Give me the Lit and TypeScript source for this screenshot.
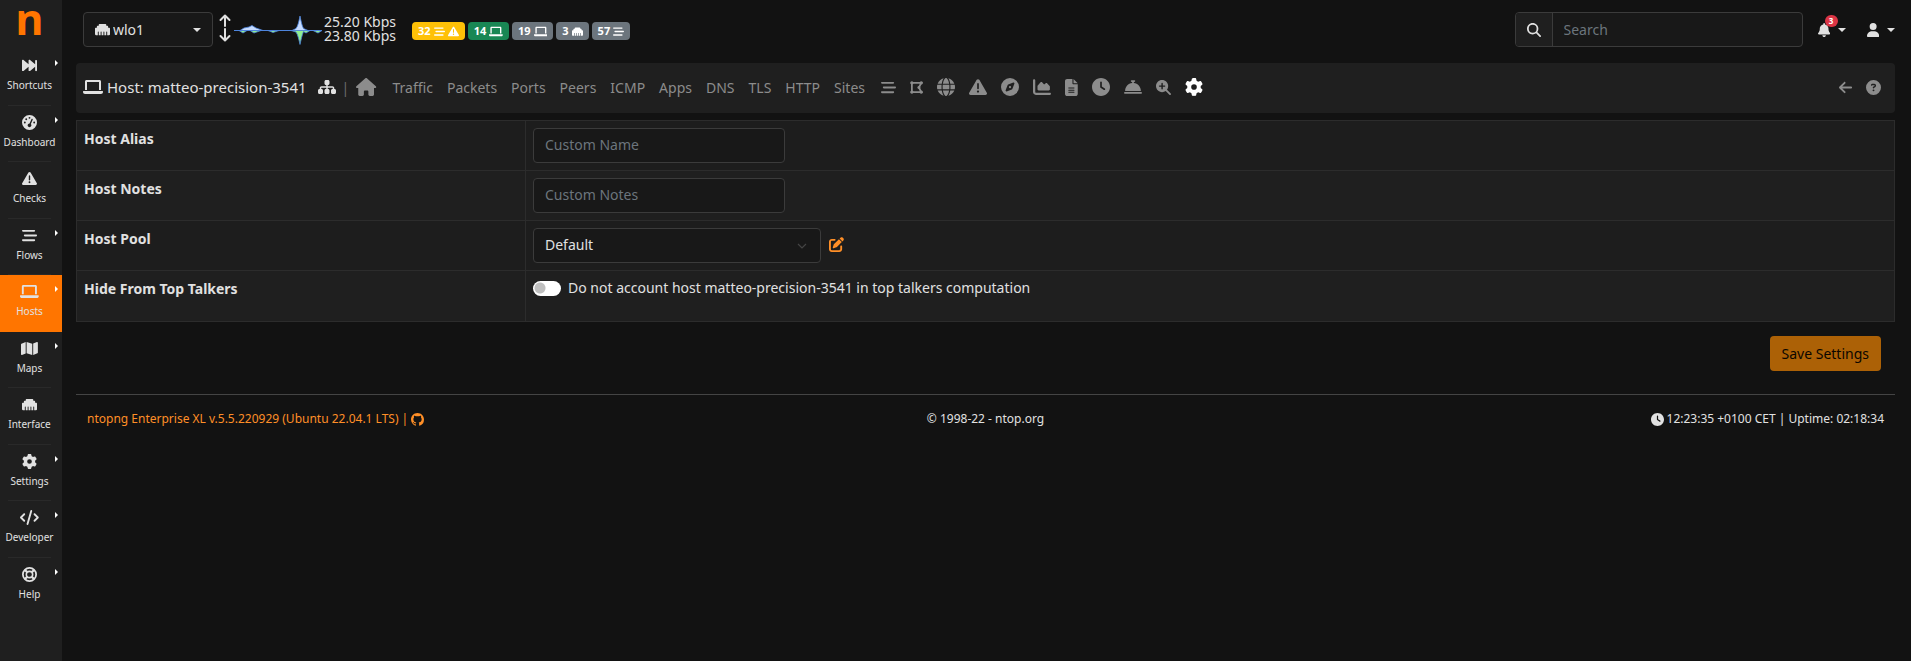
import { LitElement, html, css, svg, nothing } from "lit";
import { customElement, property, state } from "lit/decorators.js";
import { classMap } from "lit/directives/class-map.js";

type Icon = { w: number; h?: number; d?: string; body?: unknown };

const ICONS: Record<string, Icon> = {
  laptop: { w: 640, d: "M128 96h384v256h64V80C576 53.6 554.4 32 528 32h-416C85.6 32 64 53.6 64 80V352h64V96zM624 384h-608C7.3 384 0 391.3 0 400V416c0 35.3 28.8 64 64 64h512c35.3 0 64-28.8 64-64v-16C640 391.3 632.8 384 624 384z" },
  stream: { w: 512, d: "M0 96C0 78.3 14.3 64 32 64H416C433.7 64 448 78.3 448 96S433.7 128 416 128H32C14.3 128 0 113.7 0 96zM64 256C64 238.3 78.3 224 96 224H480C497.7 224 512 238.3 512 256S497.7 288 480 288H96C78.3 288 64 273.7 64 256zM416 448H32C14.3 448 0 433.7 0 416S14.3 384 32 384H416C433.7 384 448 398.3 448 416S433.7 448 416 448z" },
  warning: { w: 512, d: "M506.3 417l-213.3-364c-16.3-28-57.5-28-74 0l-213.2 364C-10.6 444.9 9.8 480 42.7 480h426.6C502.1 480 522.6 445 506.3 417zM232 168c0-13.3 10.8-24 24-24S280 154.8 280 168v128c0 13.3-10.8 24-24 24S232 309.3 232 296V168zM256 416c-17.4 0-31.4-14.1-31.4-31.4c0-17.4 14.1-31.4 31.4-31.4s31.4 14.1 31.4 31.4C287.4 401.9 273.4 416 256 416z" },
  forward: { w: 512, d: "M0 416V96c0-27.4 31.9-41.7 52.5-24.6L224 214.3V96c0-27.4 31.9-41.7 52.5-24.6L448 214.3V96c0-17.7 14.3-32 32-32S512 78.4 512 96v320c0 17.7-14.3 32-32 32S448 433.6 448 416V298.6L276.5 440.6C255.9 457.7 224 443.3 224 416V298.6L52.5 440.6C31.9 457.7 0 443.3 0 416z" },
  home: { w: 576, d: "M575.8 255.5c0 18-15 32.1-32 32.1h-32l.7 160.2c0 2.7-.2 5.4-.5 8.1V472c0 22.1-17.9 40-40 40H392c-22.1 0-40-17.9-40-40V384c0-17.7-14.3-32-32-32H256c-17.7 0-32 14.3-32 32v88c0 22.1-17.9 40-40 40H104c-22.1 0-40-17.9-40-40V287.6H32c-18 0-32-14-32-32.1c0-9 3-17 10-24L266.4 8c7-7 15-8 22-8s15 2 21 7L564.8 231.5c8 7 12 15 11 24z" },
  gear: { w: 512, d: "M495.9 166.6c3.2 8.7 .5 18.4-6.4 24.6l-43.3 39.4c1.1 8.3 1.7 16.8 1.7 25.4s-.6 17.1-1.7 25.4l43.3 39.4c6.9 6.2 9.6 15.9 6.4 24.6c-4.4 11.9-9.7 23.3-15.8 34.3l-4.7 8.1c-6.6 11-14 21.4-22.1 31.2c-5.9 7.2-15.7 9.6-24.5 6.8l-55.7-17.7c-13.4 10.3-28.2 18.9-44 25.4l-12.5 57.1c-2 9.1-9 16.3-18.2 17.8c-13.8 2.3-28 3.5-42.5 3.5s-28.7-1.2-42.5-3.5c-9.2-1.5-16.2-8.7-18.2-17.8l-12.5-57.1c-15.8-6.5-30.6-15.1-44-25.4L83.1 425.9c-8.8 2.8-18.6 .3-24.5-6.8c-8.1-9.8-15.5-20.2-22.1-31.2l-4.7-8.1c-6.1-11-11.4-22.4-15.8-34.3c-3.2-8.7-.5-18.4 6.4-24.6l43.3-39.4C64.6 273.1 64 264.6 64 256s.6-17.1 1.7-25.4L22.4 191.2c-6.9-6.2-9.6-15.9-6.4-24.6c4.4-11.9 9.7-23.3 15.8-34.3l4.7-8.1c6.6-11 14-21.4 22.1-31.2c5.9-7.2 15.7-9.6 24.5-6.8l55.7 17.7c13.4-10.3 28.2-18.9 44-25.4l12.5-57.1c2-9.1 9-16.3 18.2-17.8C227.3 1.2 241.5 0 256 0s28.7 1.2 42.5 3.5c9.2 1.5 16.2 8.7 18.2 17.8l12.5 57.1c15.8 6.5 30.6 15.1 44 25.4l55.7-17.7c8.8-2.8 18.6-.3 24.5 6.8c8.1 9.8 15.5 20.2 22.1 31.2l4.7 8.1c6.1 11 11.4 22.4 15.8 34.3zM256 336a80 80 0 1 0 0-160 80 80 0 1 0 0 160z" },
  clock: { w: 512, d: "M256 512C114.6 512 0 397.4 0 256S114.6 0 256 0S512 114.6 512 256s-114.6 256-256 256zM232 120V256c0 8 4 15.5 10.7 20l96 64c11 7.4 25.9 4.4 33.3-6.7s4.4-25.9-6.7-33.3L280 243.2V120c0-13.3-10.7-24-24-24s-24 10.7-24 24z" },
  bell: { w: 448, d: "M224 0c-17.7 0-32 14.3-32 32V51.2C119 66 64 130.6 64 208v18.8c0 47-17.3 92.4-48.5 127.6l-7.4 8.3c-8.4 9.4-10.4 22.9-5.3 34.4S19.4 416 32 416H416c12.6 0 24-7.4 29.2-18.9s3.1-25-5.3-34.4l-7.4-8.3C401.3 319.2 384 273.9 384 226.8V208c0-77.4-55-142-128-156.8V32c0-17.7-14.3-32-32-32zm45.3 493.3c12-12 18.7-28.3 18.7-45.3H160c0 17 6.7 33.3 18.7 45.3s28.3 18.7 45.3 18.7s33.3-6.7 45.3-18.7z" },
  user: { w: 448, d: "M224 256A128 128 0 1 0 224 0a128 128 0 1 0 0 256zm-45.7 48C79.8 304 0 383.8 0 482.3C0 498.7 13.3 512 29.7 512H418.3c16.4 0 29.7-13.3 29.7-29.7C448 383.8 368.2 304 269.7 304H178.3z" },
  search: { w: 512, d: "M416 208c0 45.9-14.9 88.3-40 122.7L502.6 457.4c12.5 12.5 12.5 32.8 0 45.3s-32.8 12.5-45.3 0L330.7 376c-34.4 25.2-76.8 40-122.7 40C93.1 416 0 322.9 0 208S93.1 0 208 0S416 93.1 416 208zM208 352a144 144 0 1 0 0-288 144 144 0 1 0 0 288z" },
  zoom: { w: 512, d: "M416 208c0 45.9-14.9 88.3-40 122.7L502.6 457.4c12.5 12.5 12.5 32.8 0 45.3s-32.8 12.5-45.3 0L330.7 376c-34.4 25.2-76.8 40-122.7 40C93.1 416 0 322.9 0 208S93.1 0 208 0S416 93.1 416 208zM184 296c0 13.3 10.7 24 24 24s24-10.7 24-24V232h64c13.3 0 24-10.7 24-24s-10.7-24-24-24H232V120c0-13.3-10.7-24-24-24s-24 10.7-24 24v64H120c-13.3 0-24 10.7-24 24s10.7 24 24 24h64v64z" },
  back: { w: 448, d: "M9.4 233.4c-12.5 12.5-12.5 32.8 0 45.3l160 160c12.5 12.5 32.8 12.5 45.3 0s12.5-32.8 0-45.3L109.2 288 416 288c17.7 0 32-14.3 32-32s-14.3-32-32-32l-306.7 0L214.6 118.6c12.5-12.5 12.5-32.8 0-45.3s-32.8-12.5-45.3 0l-160 160z" },
  help: { w: 512, d: "M256 512A256 256 0 1 0 256 0a256 256 0 1 0 0 512zM169.8 165.3c7.9-22.3 29.1-37.3 52.8-37.3h58.3c34.9 0 63.1 28.3 63.1 63.1c0 22.6-12.1 43.5-31.7 54.8L280 264.4c-.2 13-10.9 23.6-24 23.6c-13.3 0-24-10.7-24-24V250.5c0-8.6 4.6-16.5 12.1-20.8l44.3-25.4c4.7-2.7 7.6-7.7 7.6-13.1c0-8.4-6.8-15.1-15.1-15.1H222.6c-3.4 0-6.4 2.1-7.5 5.3l-.4 1.2c-4.4 12.5-18.2 19-30.6 14.6s-19-18.2-14.6-30.6l.4-1.2zM224 352a32 32 0 1 1 64 0 32 32 0 1 1 -64 0z" },
  globe: { w: 512, d: "M352 256c0 22.2-1.2 43.6-3.3 64H163.3c-2.2-20.4-3.3-41.8-3.3-64s1.2-43.6 3.3-64H348.7c2.2 20.4 3.3 41.8 3.3 64zm28.8-64H503.9c5.3 20.5 8.1 41.9 8.1 64s-2.8 43.5-8.1 64H380.8c2.1-20.6 3.2-42 3.2-64s-1.1-43.4-3.2-64zm112.6-32H376.7c-10-63.9-29.8-117.4-55.3-151.6c78.3 20.7 142 77.5 171.9 151.6zm-149.1 0H167.7c6.1-36.4 15.5-68.6 27-94.7c10.5-23.6 22.2-40.7 33.5-51.5C239.4 3.2 248.7 0 256 0s16.6 3.2 27.8 13.8c11.3 10.8 23 27.9 33.5 51.5c11.6 26 20.9 58.2 27 94.7zm-209 0H18.6C48.6 85.9 112.2 29.1 190.6 8.4C165.1 42.6 145.3 96.1 135.3 160zM8.1 192H131.2c-2.1 20.6-3.2 42-3.2 64s1.1 43.4 3.2 64H8.1C2.8 299.5 0 278.1 0 256s2.8-43.5 8.1-64zM194.7 446.6c-11.6-26-20.9-58.2-27-94.6H344.3c-6.1 36.4-15.5 68.6-27 94.6c-10.5 23.6-22.2 40.7-33.5 51.5C272.6 508.8 263.3 512 256 512s-16.6-3.2-27.8-13.8c-11.3-10.8-23-27.9-33.5-51.5zM135.3 352c10 63.9 29.8 117.4 55.3 151.6C112.2 482.9 48.6 426.1 18.6 352H135.3zm358.1 0c-30 74.1-93.6 130.9-171.9 151.6c25.5-34.2 45.2-87.7 55.3-151.6H493.4z" },
  compass: { w: 512, d: "M256 512A256 256 0 1 0 256 0a256 256 0 1 0 0 512zm50.7-186.9L162.4 380.6c-19.4 7.5-38.5-11.6-31-31l55.5-144.3c3.3-8.5 9.9-15.1 18.4-18.4l144.3-55.5c19.4-7.5 38.5 11.6 31 31L325.1 306.7c-3.2 8.5-9.9 15.1-18.4 18.4zM288 256a32 32 0 1 0 -64 0 32 32 0 1 0 64 0z" },
  chart: { w: 512, d: "M64 64c0-17.7-14.3-32-32-32S0 46.3 0 64V400c0 44.2 35.8 80 80 80H480c17.7 0 32-14.3 32-32s-14.3-32-32-32H80c-8.8 0-16-7.2-16-16V64zm96 288H448c17.7 0 32-14.3 32-32V251.8c0-7.6-2.7-15-7.7-20.8l-65.8-76.8c-12.1-14.2-33.7-15-46.9-1.8l-21 21c-10 10-26.4 9.2-35.4-1.6l-39.2-47c-12.6-15.1-35.7-15.4-48.7-.6L135.9 215c-5.1 5.8-7.9 13.3-7.9 21.1v84c0 17.7 14.3 32 32 32z" },
  file: { w: 384, d: "M64 0C28.7 0 0 28.7 0 64V448c0 35.3 28.7 64 64 64H320c35.3 0 64-28.7 64-64V160H256c-17.7 0-32-14.3-32-32V0H64zM256 0V128H384L256 0zM112 256H272c8.8 0 16 7.2 16 16s-7.2 16-16 16H112c-8.8 0-16-7.2-16-16s7.2-16 16-16zm0 64H272c8.8 0 16 7.2 16 16s-7.2 16-16 16H112c-8.8 0-16-7.2-16-16s7.2-16 16-16zm0 64H272c8.8 0 16 7.2 16 16s-7.2 16-16 16H112c-8.8 0-16-7.2-16-16s7.2-16 16-16z" },
  concierge: { w: 512, d: "M216 64c-13.3 0-24 10.7-24 24s10.7 24 24 24h16v33.3C119.6 157.2 32 252.4 32 368H480c0-115.6-87.6-210.8-200-222.7V112h16c13.3 0 24-10.7 24-24s-10.7-24-24-24H216zM24 400c-13.3 0-24 10.7-24 24s10.7 24 24 24H488c13.3 0 24-10.7 24-24s-10.7-24-24-24H24z" },
  sitemap: { w: 576, d: "M208 80c0-26.5 21.5-48 48-48h64c26.5 0 48 21.5 48 48v64c0 26.5-21.5 48-48 48h-8v40H464c30.9 0 56 25.1 56 56v32h8c26.5 0 48 21.5 48 48v64c0 26.5-21.5 48-48 48H464c-26.5 0-48-21.5-48-48V368c0-26.5 21.5-48 48-48h8V288c0-4.4-3.6-8-8-8H312v40h8c26.5 0 48 21.5 48 48v64c0 26.5-21.5 48-48 48H256c-26.5 0-48-21.5-48-48V368c0-26.5 21.5-48 48-48h8V280H112c-4.4 0-8 3.6-8 8v32h8c26.5 0 48 21.5 48 48v64c0 26.5-21.5 48-48 48H48c-26.5 0-48-21.5-48-48V368c0-26.5 21.5-48 48-48h8V288c0-30.9 25.1-56 56-56H264V192h-8c-26.5 0-48-21.5-48-48V80z" },
  map: { w: 576, d: "M384 476.1L192 421.2V35.9L384 90.8V476.1zm32-1.2V88.4L543.1 37.5c15.8-6.3 32.9 5.3 32.9 22.3V394.6c0 9.8-6 18.6-15.1 22.3L416 474.8zM15.1 95.1L160 37.2V423.6L32.9 474.5C17.1 480.8 0 469.2 0 452.2V117.4c0-9.8 6-18.6 15.1-22.3z" },
  code: { w: 640, d: "M392.8 1.2c-17-4.9-34.7 5-39.6 22l-128 448c-4.9 17 5 34.7 22 39.6s34.7-5 39.6-22l128-448c4.9-17-5-34.7-22-39.6zm80.6 120.1c-12.5 12.5-12.5 32.8 0 45.3L562.7 256l-89.4 89.4c-12.5 12.5-12.5 32.8 0 45.3s32.8 12.5 45.3 0l112-112c12.5-12.5 12.5-32.8 0-45.3l-112-112c-12.5-12.5-32.8-12.5-45.3 0zm-306.7 0c-12.5-12.5-32.8-12.5-45.3 0l-112 112c-12.5 12.5-12.5 32.8 0 45.3l112 112c12.5 12.5 32.8 12.5 45.3 0s12.5-32.8 0-45.3L77.3 256l89.4-89.4c12.5-12.5 12.5-32.8 0-45.3z" },
  gauge: { w: 512, d: "M0 256a256 256 0 1 1 512 0A256 256 0 1 1 0 256zM288 96a32 32 0 1 0 -64 0 32 32 0 1 0 64 0zM256 416c35.3 0 64-28.7 64-64c0-17.4-6.9-33.1-18.1-44.6L366 161.7c5.3-12.1-.2-26.3-12.3-31.6s-26.3 .2-31.6 12.3L257.9 288c-36.7 0-65.9 28.7-65.9 64s28.7 64 64 64zM176 144a32 32 0 1 0 -64 0 32 32 0 1 0 64 0zM96 288a32 32 0 1 0 0-64 32 32 0 1 0 0 64zm352-32a32 32 0 1 0 -64 0 32 32 0 1 0 64 0z" },
  ethernet: { w: 512, d: "M0 224V416c0 17.7 14.3 32 32 32H96V336c0-8.8 7.2-16 16-16s16 7.2 16 16V448h64V336c0-8.8 7.2-16 16-16s16 7.2 16 16V448h64V336c0-8.8 7.2-16 16-16s16 7.2 16 16V448h64V336c0-8.8 7.2-16 16-16s16 7.2 16 16V448h64c17.7 0 32-14.3 32-32V224c0-17.7-14.3-32-32-32H448V160c0-17.7-14.3-32-32-32H384V96c0-17.7-14.3-32-32-32H160c-17.7 0-32 14.3-32 32v32H96c-17.7 0-32 14.3-32 32v32H32c-17.7 0-32 14.3-32 32z" },
  edit: { w: 512, d: "M471.6 21.7c-21.9-21.9-57.3-21.9-79.2 0L362.3 51.7l97.9 97.9 30.1-30.1c21.9-21.9 21.9-57.3 0-79.2L471.6 21.7zm-299.2 220c-6.1 6.1-10.8 13.6-13.5 21.9l-29.6 88.8c-2.9 8.6-.6 18.1 5.8 24.6s15.9 8.7 24.6 5.8l88.8-29.6c8.2-2.7 15.7-7.4 21.9-13.5L437.7 172.3 339.7 74.3 172.4 241.7zM96 64C43 64 0 107 0 160V416c0 53 43 96 96 96H352c53 0 96-43 96-96V320c0-17.7-14.3-32-32-32s-32 14.3-32 32v96c0 17.7-14.3 32-32 32H96c-17.7 0-32-14.3-32-32V160c0-17.7 14.3-32 32-32h96c17.7 0 32-14.3 32-32s-14.3-32-32-32H96z" },
  github: { w: 16, h: 16, d: "M8 0C3.58 0 0 3.58 0 8c0 3.54 2.29 6.53 5.47 7.59.4.07.55-.17.55-.38 0-.19-.01-.82-.01-1.49-2.01.37-2.53-.49-2.69-.94-.09-.23-.48-.94-.82-1.13-.28-.15-.68-.52-.01-.53.63-.01 1.08.58 1.23.82.72 1.21 1.87.87 2.33.66.07-.52.28-.87.51-1.07-1.78-.2-3.64-.89-3.64-3.95 0-.87.31-1.59.82-2.15-.08-.2-.36-1.02.08-2.12 0 0 .67-.21 2.2.82.64-.18 1.32-.27 2-.27.68 0 1.36.09 2 .27 1.53-1.04 2.2-.82 2.2-.82.44 1.1.16 1.92.08 2.12.51.56.82 1.27.82 2.15 0 3.07-1.87 3.75-3.65 3.95.29.25.54.73.54 1.48 0 1.07-.01 1.93-.01 2.2 0 .21.15.46.55.38A8.013 8.013 0 0016 8c0-4.42-3.58-8-8-8z" },
  polygon: { w: 448, body: svg`<path d="M64 96H384L304 256L384 416H64Z" fill="none" stroke="currentColor" stroke-width="60"/><path d="M64 40a56 56 0 1 0 .1 0zM384 40a56 56 0 1 0 .1 0zM304 204a52 52 0 1 0 .1 0zM384 360a56 56 0 1 0 .1 0zM64 360a56 56 0 1 0 .1 0z"/>` },
  ring: { w: 512, body: svg`<g fill="none" stroke="currentColor"><circle cx="256" cy="256" r="226" stroke-width="60"/><circle cx="256" cy="256" r="108" stroke-width="54"/><path d="M100 100L180 180M412 100L332 180M100 412L180 332M412 412L332 332" stroke-width="76"/></g>` },
  updown: { w: 12, h: 28, body: svg`<path d="M6 12V2M1.5 6L6 1.5L10.5 6M6 15V26M1.5 22L6 26.5L10.5 22" fill="none" stroke="currentColor" stroke-width="2" stroke-linecap="round" stroke-linejoin="round"/>` },
};

@customElement("nt-icon")
class NtIcon extends LitElement {
  @property() name = "";
  @property({ type: Number }) size = 14;
  static styles = css`
    :host { display: inline-flex; flex: none; }
    .glyph { display: block; fill: currentColor; fill-rule: evenodd; }
  `;
  render() {
    const i = ICONS[this.name];
    const h = i.h ?? 512;
    return html`<svg class="glyph" aria-hidden="true" height=${this.size} width=${(this.size * i.w) / h} viewBox="0 0 ${i.w} ${h}">
      ${i.d ? svg`<path d=${i.d}></path>` : i.body}
    </svg>`;
  }
}

const shared = css`
  *, *::before, *::after { box-sizing: border-box; }
  a { color: inherit; text-decoration: none; }
  button, input, select { font: inherit; color: inherit; margin: 0; }
`;

@customElement("nt-sidebar")
class NtSidebar extends LitElement {
  static styles = [shared, css`
    :host { display: block; background: #1f1f1f; color: #e1e1e1; }
    .logo { display: block; height: 49px; padding-right: 3px; line-height: 38px; text-align: center; color: #ff7500; font-size: 43px; font-weight: 700; }
    .list { list-style: none; margin: 0; padding: 0; }
    .item.active { background: #ff7500; }
    .link { display: grid; justify-items: center; padding: 5px 3px 11px 0; }
    .icon { grid-area: 1 / 1; height: 23px; display: flex; align-items: center; }
    .caret { grid-area: 1 / 1; justify-self: end; margin: 6px 1px 0 0; width: 3px; height: 6px; border-left: 3px solid #fff; border-top: 3px solid transparent; border-bottom: 3px solid transparent; }
    .label { font-size: 10px; line-height: 1.65; }
    .rule { height: 1px; margin: 0 11px 0 8px; border: 0; background: #292929; }
    .item.active .rule, .item:last-child .rule { background: transparent; }
  `];
  items: [string, string, boolean][] = [
    ["Shortcuts", "forward", true], ["Dashboard", "gauge", true], ["Checks", "warning", false],
    ["Flows", "stream", true], ["Hosts", "laptop", true], ["Maps", "map", true],
    ["Interface", "ethernet", false], ["Settings", "gear", true], ["Developer", "code", true], ["Help", "ring", true],
  ];
  render() {
    return html`<nav aria-label="Main">
      <a class="logo" href="#">n</a>
      <ul class="list">
        ${this.items.map(([label, icon, sub]) => html`
          <li class=${classMap({ item: true, active: label === "Hosts" })}>
            <a class="link" href="#">
              <span class="icon"><nt-icon name=${icon} size="15"></nt-icon></span>
              ${sub ? html`<span class="caret"></span>` : nothing}
              <span class="label">${label}</span>
            </a>
            <hr class="rule" />
          </li>`)}
      </ul>
    </nav>`;
  }
}

@customElement("nt-topbar")
class NtTopbar extends LitElement {
  static styles = [shared, css`
    :host { display: flex; align-items: center; height: 59px; padding: 0 0 0 7px; color: #e1e1e1; }
    .picker { display: grid; align-items: center; width: 130px; }
    .picker > * { grid-area: 1 / 1; }
    .picker nt-icon { margin-left: 12px; pointer-events: none; }
    .iface { appearance: none; width: 100%; height: 35px; padding: 0 10px 1px 29px; background: #181818; border: 1px solid #3b3b3b; border-radius: 4px; font-size: 14px; }
    .caret { width: 8px; height: 4px; border: 4px solid transparent; border-top-color: currentColor; border-bottom: 0; }
    .picker .caret { justify-self: end; margin-right: 12px; pointer-events: none; }
    .arrows { margin: -3px 3px 0 6px; }
    .spark { display: block; }
    .rates { margin: -2px 0 0 2px; font-size: 14px; line-height: 14px; white-space: nowrap; }
    .badges { display: flex; gap: 3px; margin: 3px 0 0 16px; }
    .badge { display: flex; align-items: center; gap: 3px; height: 18px; padding: 0 6px; border-radius: 4px; background: #6c757d; color: #fff; font-size: 11px; font-weight: 700; }
    .badge.warn { background: #ffc107; }
    .badge.ok { background: #198754; }
    .search { display: flex; margin-left: auto; width: 288px; height: 35px; border: 1px solid #3b3b3b; border-radius: 4px; overflow: hidden; background: #181818; }
    .lens { display: flex; align-items: center; padding: 0 11px; background: #1f1f1f; border-right: 1px solid #3b3b3b; }
    .query { flex: 1; min-width: 0; border: 0; background: none; padding: 0 11px 1px; font-size: 14px; }
    .query::placeholder { color: #6c757d; opacity: 1; }
    .menu { display: flex; align-items: center; gap: 8px; padding: 0; border: 0; background: none; }
    .alerts { position: relative; margin-left: 15px; }
    .user { margin-left: 21px; }
    .count { position: absolute; left: 7px; top: -8px; width: 13px; height: 12px; border-radius: 6px; background: #dc3545; color: #fff; font-size: 8px; line-height: 12px; font-weight: 700; text-align: center; }
  `];
  badges: [string, string[], string][] = [
    ["32", ["stream", "warning"], "warn"], ["14", ["laptop"], "ok"], ["19", ["laptop"], ""], ["3", ["ethernet"], ""], ["57", ["stream"], ""],
  ];
  render() {
    return html`
      <label class="picker">
        <select class="iface" aria-label="Interface"><option>wlo1</option></select>
        <nt-icon name="ethernet" size="15"></nt-icon>
        <span class="caret"></span>
      </label>
      <nt-icon class="arrows" name="updown" size="28"></nt-icon>
      <svg class="spark" width="88" height="30" viewBox="0 0 88 30" aria-hidden="true">
        <path d="M6 15.5L10 13L15 12L18 10.5L22 13L29 15.5H58L62 13.5C64 11 65 6 66 1C67 6 68 11 69.500 13.5L74 15.500Z" fill="#c6dbff" stroke="#4d84dc" stroke-width="0.8"/>
        <path d="M5 15.500L9 18L13 15.5H16L20 18L27 15.500H34L39 17.500L45 15.500H57L62 17C64 20 65 25 66 29.500C67 25 68 20 69.500 16.500L72 18L76 15.500H79L84 18L88 15.500Z" fill="#90ee90" stroke="#4d84dc" stroke-width="0.8"/>
        <path d="M0 15.5H60M71 15.500H88" stroke="#4d84dc" stroke-width="1.2"/>
      </svg>
      <div class="rates"><div>25.20 Kbps</div><div>23.80 Kbps</div></div>
      <div class="badges">
        ${this.badges.map(([n, icons, tone]) => html`<a class="badge ${tone}" href="#"><span>${n}</span>${icons.map((i) => html`<nt-icon name=${i} size="11"></nt-icon>`)}</a>`)}
      </div>
      <label class="search">
        <span class="lens"><nt-icon name="search" size="14"></nt-icon></span>
        <input class="query" type="text" placeholder="Search" aria-label="Search" />
      </label>
      <button class="menu alerts" aria-label="Alerts"><nt-icon name="bell" size="14"></nt-icon><span class="count">3</span><span class="caret"></span></button>
      <button class="menu user" aria-label="User"><nt-icon name="user" size="14"></nt-icon><span class="caret"></span></button>
    `;
  }
}

@customElement("nt-hostbar")
class NtHostbar extends LitElement {
  static styles = [shared, css`
    :host { display: flex; align-items: center; box-sizing: border-box; height: 50px; padding: 0 14px 2px 7px; border-radius: 4px; background: #1f1f1f; color: #8c8c8c; }
    .title { display: flex; align-items: center; gap: 4px; color: #e1e1e1; font-size: 15px; white-space: nowrap; }
    .title .tree { margin-left: 7px; }
    .sep { margin: 0 7px 0 6px; font-size: 14px; color: #6c6c6c; }
    .tabs, .icons { display: flex; align-items: center; gap: 14px; margin-left: 16px; font-size: 14px; }
    .tab { display: flex; align-items: center; }
    .active { color: #fff; }
    .tools { display: flex; align-items: center; gap: 14px; margin-left: auto; }
    .tool { display: flex; padding: 0; border: 0; background: none; }
  `];
  tabs = ["Traffic", "Packets", "Ports", "Peers", "ICMP", "Apps", "DNS", "TLS", "HTTP", "Sites"];
  icons: [string, number, string][] = [
    ["stream", 15, "Flows"], ["polygon", 15, "Ports map"], ["globe", 18, "Countries"], ["warning", 18, "Alerts"],
    ["compass", 18, "Map"], ["chart", 18, "Historical"], ["file", 17, "Report"], ["clock", 18, "Timeline"],
    ["concierge", 18, "Services"], ["zoom", 15, "Explore"], ["gear", 18, "Settings"],
  ];
  render() {
    return html`
      <span class="title"><nt-icon name="laptop" size="16"></nt-icon><span>Host: matteo-precision-3541</span><nt-icon class="tree" name="sitemap" size="16"></nt-icon></span>
      <span class="sep">|</span>
      <a class="tab" href="#" aria-label="Home"><nt-icon name="home" size="18"></nt-icon></a>
      <nav class="tabs">${this.tabs.map((t) => html`<a class="tab" href="#">${t}</a>`)}</nav>
      <nav class="icons">${this.icons.map(([n, s, l]) => html`<a class=${classMap({ tab: true, active: n === "gear" })} href="#" aria-label=${l}><nt-icon name=${n} size=${s}></nt-icon></a>`)}</nav>
      <span class="tools">
        <button class="tool" aria-label="Back"><nt-icon name="back" size="15"></nt-icon></button>
        <button class="tool" aria-label="Help"><nt-icon name="help" size="15"></nt-icon></button>
      </span>
    `;
  }
}

@customElement("nt-host-form")
class NtHostForm extends LitElement {
  @state() private hideFromTop = false;
  static styles = [shared, css`
    :host { display: block; color: #e1e1e1; font-size: 14px; line-height: 21px; }
    .grid { width: 100%; table-layout: fixed; border-collapse: collapse; background: #1f1f1f; }
    .key { width: 449px; text-align: left; font-weight: 700; }
    .key, .value { height: 50px; padding: 7px; border: 1px solid #2c2c2c; vertical-align: top; }
    .row:nth-child(odd) { background: #1d1d1d; }
    .row:last-child .value { height: 51px; }
    .field, .pool { display: block; height: 35px; padding: 0 11px 2px; background: #181818; border: 1px solid #3b3b3b; border-radius: 4px; }
    .field { width: 252px; }
    .field::placeholder { color: #6c757d; opacity: 1; }
    .line { display: flex; align-items: center; gap: 8px; }
    .picker { display: grid; align-items: center; width: 288px; }
    .picker > * { grid-area: 1 / 1; }
    .pool { appearance: none; width: 100%; }
    .chevron { justify-self: end; margin-right: 14px; pointer-events: none; }
    .edit { display: flex; padding-bottom: 2px; color: #ff8f27; }
    .check { display: flex; align-items: center; gap: 7px; width: fit-content; }
    .check span { line-height: 19px; padding-bottom: 2px; }
    .switch { appearance: none; width: 28px; height: 15px; border-radius: 8px; background: radial-gradient(circle at 7px 7px, #bfbfbf 5px, #fff 6px); }
    .switch:checked { background: radial-gradient(circle at 21px 7px, #fff 5px, #ff7500 6px); }
    .actions { display: flex; justify-content: flex-end; padding: 14px 14px 0; }
    .save { height: 35px; padding: 0 12px; border: 0; border-radius: 4px; background: #ac6106; color: #0b0600; }
  `];
  render() {
    return html`<form @submit=${(e: Event) => e.preventDefault()}>
      <table class="grid">
        <tr class="row"><th class="key" scope="row"><label for="alias">Host Alias</label></th>
          <td class="value"><input class="field" id="alias" type="text" placeholder="Custom Name" /></td></tr>
        <tr class="row"><th class="key" scope="row"><label for="notes">Host Notes</label></th>
          <td class="value"><input class="field" id="notes" type="text" placeholder="Custom Notes" /></td></tr>
        <tr class="row"><th class="key" scope="row"><label for="pool">Host Pool</label></th>
          <td class="value"><div class="line">
            <span class="picker">
              <select class="pool" id="pool"><option>Default</option></select>
              <svg class="chevron" width="10" height="6" viewBox="0 0 10 6" aria-hidden="true"><path d="M1 1L5 5L9 1" fill="none" stroke="#444" stroke-width="1.2"/></svg>
            </span>
            <a class="edit" href="#" aria-label="Edit pools"><nt-icon name="edit" size="15"></nt-icon></a>
          </div></td></tr>
        <tr class="row"><th class="key" scope="row">Hide From Top Talkers</th>
          <td class="value"><label class="check">
            <input class="switch" type="checkbox" .checked=${this.hideFromTop} @change=${(e: Event) => (this.hideFromTop = (e.target as HTMLInputElement).checked)} />
            <span>Do not account host matteo-precision-3541 in top talkers computation</span>
          </label></td></tr>
      </table>
      <div class="actions"><button class="save" type="submit">Save Settings</button></div>
    </form>`;
  }
}

@customElement("app-root")
class AppRoot extends LitElement {
  static styles = [shared, css`
    :host { display: grid; grid-template-columns: 62px minmax(0, 1fr); min-height: 100vh; background: #121212; color: #e1e1e1; font-family: "Noto Sans", sans-serif; font-size: 14px; line-height: 1.5; }
    .main { padding: 0 16px 0 14px; }
    .top { margin-bottom: 4px; }
    .form { margin-top: 7px; }
    .footer { display: grid; grid-template-columns: 1fr auto 1fr; margin-top: 23px; padding: 15px 11px 0; border-top: 1px solid #444; font-size: 12px; line-height: 18px; }
    .version, .time { display: flex; align-items: center; gap: 3px; }
    .version { color: #ff8f27; }
    .time { justify-content: flex-end; }
  `];
  render() {
    return html`
      <nt-sidebar></nt-sidebar>
      <div class="main">
        <nt-topbar class="top"></nt-topbar>
        <nt-hostbar></nt-hostbar>
        <nt-host-form class="form"></nt-host-form>
        <footer class="footer">
          <a class="version" href="#"><span>ntopng Enterprise XL v.5.5.220929 (Ubuntu 22.04.1 LTS) |</span><nt-icon name="github" size="13"></nt-icon></a>
          <span>© 1998-22 - ntop.org</span>
          <span class="time"><nt-icon name="clock" size="13"></nt-icon><span>12:23:35 +0100 CET | Uptime: 02:18:34</span></span>
        </footer>
      </div>
    `;
  }
}
